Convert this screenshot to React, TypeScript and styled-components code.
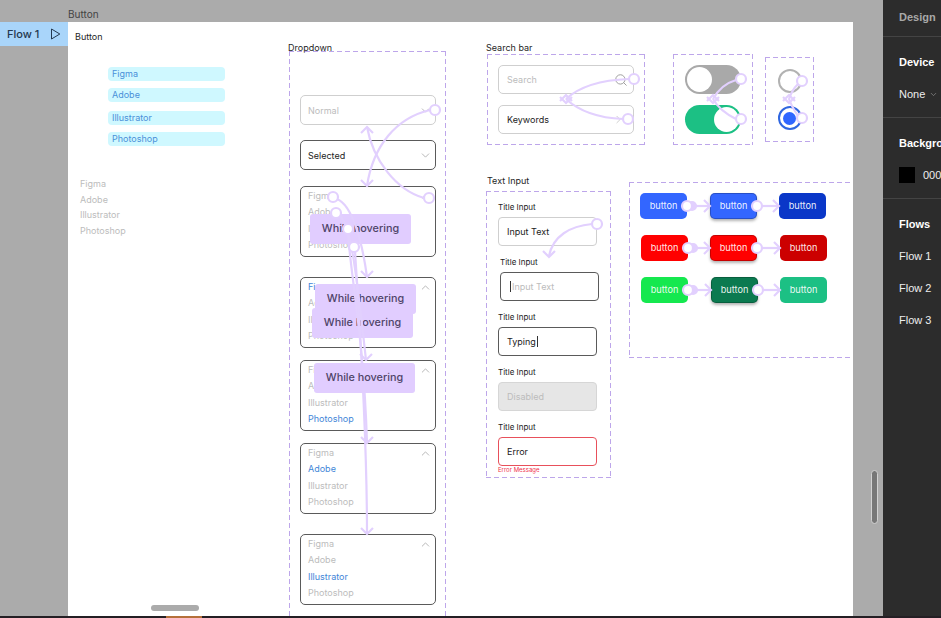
import { Fragment } from "react";
import styled, { createGlobalStyle, css } from "styled-components";
import { ChevronDown, ChevronRight, ChevronUp, Search } from "lucide-react";

const LILAC = "#e2d0fe";
const LIST = ["Figma", "Adobe", "Illustrator", "Photoshop"];

const dashed = css`
	background:
		repeating-linear-gradient(to right, #bda6ea 0 5px, transparent 5px 8px) top / 100% 1px no-repeat,
		repeating-linear-gradient(to right, #bda6ea 0 5px, transparent 5px 8px) bottom / 100% 1px no-repeat,
		repeating-linear-gradient(to bottom, #bda6ea 0 5px, transparent 5px 8px) left / 1px 100% no-repeat,
		repeating-linear-gradient(to bottom, #bda6ea 0 5px, transparent 5px 8px) right / 1px 100% no-repeat;
`;

const GlobalStyle = createGlobalStyle`
	html, body {
		margin: 0;
		padding: 0;
		background: #ababab;
		font-family: Inter, "Liberation Sans", sans-serif;
	}
`;

const Nodes: [number, number][] = [
	[435, 110], [429, 198], [333, 197], [336, 213], [348, 229], [354, 247],
	[634, 79], [628, 119], [741, 79], [741, 119], [802, 81], [802, 118], [597, 224],
	[687, 206], [757, 206], [688, 248], [757, 248], [688, 290], [758, 290],
];

const Curves = [
	"M430 110C396 118 373 146 367 186",
	"M424 198C396 190 373 160 367 127",
	"M337 199C352 205 362 240 367 277",
	"M340 216C352 225 358 290 366 360",
	"M348 233C350 270 364 340 367 443",
	"M355 251C358 300 367 420 367 534",
	"M629 79C602 80 580 86 566 99",
	"M623 119C600 118 580 112 566 99",
	"M736 80C726 83 718 90 713 99",
	"M736 119C726 114 718 108 713 99",
	"M798 84C794 88 791 93 789 99",
	"M798 116C794 110 791 105 789 99",
	"M592 224C570 226 553 236 549 256",
	"M692 206H710", "M762 206H779",
	"M693 248H710", "M762 248H780",
	"M693 290H711", "M763 290H780",
];

// x, y, direction the arrow travels
const Heads: [number, number, "up" | "down" | "right"][] = [
	[367, 186, "down"], [367, 127, "up"], [367, 277, "down"], [366, 360, "down"],
	[367, 443, "down"], [367, 534, "down"],
	[566, 103, "down"], [566, 95, "up"], [713, 103, "down"], [713, 95, "up"],
	[789, 103, "down"], [789, 95, "up"], [549, 257, "down"],
	[710, 206, "right"], [779, 206, "right"], [710, 248, "right"], [780, 248, "right"],
	[711, 290, "right"], [780, 290, "right"],
];

const headPath = (x: number, y: number, dir: string) => {
	if (dir === "down") return `M${x - 6} ${y - 6}L${x} ${y}L${x + 6} ${y - 6}`;
	if (dir === "up") return `M${x - 6} ${y + 6}L${x} ${y}L${x + 6} ${y + 6}`;
	return `M${x - 6} ${y - 6}L${x} ${y}L${x - 6} ${y + 6}`;
};

const Connections = () => (
	<Overlay viewBox="0 0 941 618" width="941" height="618">
		<g fill="none" stroke={LILAC} strokeWidth="2.2">
			{Curves.map((d) => (
				<path key={d} d={d} />
			))}
			{Heads.map(([x, y, dir]) => (
				<path key={`${x}-${y}-${dir}`} d={headPath(x, y, dir)} />
			))}
			<circle cx="692" cy="206" r="4" fill={LILAC} />
			<circle cx="693" cy="248" r="4" fill={LILAC} />
			<circle cx="693" cy="290" r="4" fill={LILAC} />
			{Nodes.map(([x, y]) => (
				<circle key={`${x}-${y}`} cx={x} cy={y} r="5" fill="#fff" />
			))}
		</g>
	</Overlay>
);

const OpenList = ({ active, gap }: { active?: string; gap: number }) => (
	<Select $open $mt={gap}>
		<ListCol>
			{LIST.map((name) => (
				<ListItem key={name} $active={name === active}>
					{name}
				</ListItem>
			))}
		</ListCol>
		<Chevron $open>
			<ChevronUp size={13} strokeWidth={1.5} />
		</Chevron>
	</Select>
);

const App = () => {
	return (
		<Fragment>
			<GlobalStyle />
			<Page>
				<Workspace>
					<Viewport>
						<FrameLabel>Button</FrameLabel>
						<FlowTag>
							Flow 1
							<svg width="11" height="12" viewBox="0 0 11 12" fill="none" stroke="#24384f" strokeWidth="1">
								<path d="M1.5 1L9.8 6L1.5 11Z" />
							</svg>
						</FlowTag>
						<Frame>
							<Block $x={7} $y={9}>
								<Caption>Button</Caption>
							</Block>

							<Block $x={40} $y={45}>
								<ChipStack>
									<Chip>Figma</Chip>
									<Chip $mt={7}>Adobe</Chip>
									<Chip $mt={9}>Illustrator</Chip>
									<Chip $mt={7}>Photoshop</Chip>
								</ChipStack>
							</Block>

							<Block $x={12} $y={156}>
								<PlainList>
									{LIST.map((name) => (
										<PlainItem key={name}>{name}</PlainItem>
									))}
								</PlainList>
							</Block>

							<Block $x={220} $y={20}>
								<Caption>Dropdown</Caption>
							</Block>
							<DropdownBox>
								<Select $muted>
									<span>Normal</span>
									<Chevron>
										<ChevronDown size={13} strokeWidth={1.5} />
									</Chevron>
								</Select>
								<Select $mt={15}>
									<Value>Selected</Value>
									<Chevron>
										<ChevronDown size={13} strokeWidth={1.5} />
									</Chevron>
								</Select>
								<OpenList gap={16} />
								<OpenList active="Figma" gap={20} />
								<OpenList active="Photoshop" gap={12} />
								<OpenList active="Adobe" gap={12} />
								<OpenList active="Illustrator" gap={20} />
							</DropdownBox>

							<Hover $x={242} $y={192}>While hovering</Hover>
							<Hover $x={247} $y={262}>While hovering</Hover>
							<Hover $x={244} $y={286}>While hovering</Hover>
							<Hover $x={246} $y={341} $above>While hovering</Hover>

							<Block $x={418} $y={20}>
								<Caption>Search bar</Caption>
							</Block>
							<SearchBox>
								<Field>
									<Placeholder>Search</Placeholder>
									<FieldIcon>
										<Search size={14} strokeWidth={1.6} color="#9a9a9a" />
									</FieldIcon>
								</Field>
								<Field>
									<Value>Keywords</Value>
									<ChevronRight size={13} strokeWidth={1.3} color="#bbb" />
								</Field>
							</SearchBox>

							<ToggleBox>
								<Toggle />
								<Toggle $on />
							</ToggleBox>

							<RadioBox>
								<Radio />
								<Radio $on />
							</RadioBox>

							<Block $x={419} $y={153}>
								<Caption>Text Input</Caption>
							</Block>
							<InputBox>
								<InputGroup>
									<InputTitle>Title Input</InputTitle>
									<TextBox>
										<Value>Input Text</Value>
									</TextBox>
								</InputGroup>
								<InputGroup $shift={2}>
									<InputTitle>Title Input</InputTitle>
									<TextBox $state="focus">
										<Caret />
										<Placeholder>Input Text</Placeholder>
									</TextBox>
								</InputGroup>
								<InputGroup>
									<InputTitle>Title Input</InputTitle>
									<TextBox $state="focus">
										<Value>Typing</Value>
										<Caret />
									</TextBox>
								</InputGroup>
								<InputGroup>
									<InputTitle>Title Input</InputTitle>
									<TextBox $state="disabled">
										<Placeholder>Disabled</Placeholder>
									</TextBox>
								</InputGroup>
								<InputGroup>
									<InputTitle>Title Input</InputTitle>
									<TextBox $state="error">
										<Value>Error</Value>
									</TextBox>
									<ErrorText>Error Message</ErrorText>
								</InputGroup>
							</InputBox>

							<ButtonBox>
								<ButtonRow>
									<Btn $bg="#3366ff">button</Btn>
									<Btn $bg="#3366ff" $pressed $ml={23}>button</Btn>
									<Btn $bg="#0a37c8" $ml={22}>button</Btn>
								</ButtonRow>
								<ButtonRow $shift={1}>
									<Btn $bg="#ff0000">button</Btn>
									<Btn $bg="#ff0000" $pressed $ml={22}>button</Btn>
									<Btn $bg="#cc0000" $ml={23}>button</Btn>
								</ButtonRow>
								<ButtonRow $shift={1}>
									<Btn $bg="#15e84f">button</Btn>
									<Btn $bg="#0b7a50" $pressed $ml={23}>button</Btn>
									<Btn $bg="#1cc084" $ml={22}>button</Btn>
								</ButtonRow>
							</ButtonBox>
						</Frame>
						<ScrollThumbY />
						<ScrollThumbX />
						<Connections />
					</Viewport>

					<Panel>
						<PanelSection $h={37}>
							<PanelTab>Design</PanelTab>
						</PanelSection>
						<PanelSection $h={81} $gap={20} $pt={19}>
							<PanelTitle>Device</PanelTitle>
							<PanelRow>
								None
								<ChevronDown size={9} color="#888" />
							</PanelRow>
						</PanelSection>
						<PanelSection $h={81} $gap={17} $pt={19}>
							<PanelTitle>Background</PanelTitle>
							<PanelRow>
								<Swatch />
								000000
							</PanelRow>
						</PanelSection>
						<FlowList>
							<FlowsTitle>Flows</FlowsTitle>
							<PanelRow>Flow 1</PanelRow>
							<PanelRow>Flow 2</PanelRow>
							<PanelRow>Flow 3</PanelRow>
						</FlowList>
					</Panel>
				</Workspace>
				<BottomStrip>
					<BottomAccent />
				</BottomStrip>
			</Page>
		</Fragment>
	);
};

export default App;

const Page = styled.div`
	width: 941px;
	height: 618px;
	overflow: hidden;
	display: flex;
	flex-direction: column;
`;

const Workspace = styled.div`
	flex: 1;
	min-height: 0;
	display: flex;
`;

const Viewport = styled.div`
	flex: 1;
	position: relative;
	padding: 22px 30px 0 68px;
	background: #ababab;
`;

const Overlay = styled.svg`
	position: absolute;
	left: 0;
	top: 0;
	z-index: 1;
	pointer-events: none;
`;

const FrameLabel = styled.div`
	position: absolute;
	left: 68px;
	top: 8px;
	font-size: 10px;
	line-height: 12px;
	color: #444;
`;

const FlowTag = styled.div`
	position: absolute;
	left: 0;
	top: 22px;
	width: 68px;
	height: 24px;
	box-sizing: border-box;
	padding: 0 7px;
	display: flex;
	align-items: center;
	justify-content: space-between;
	background: #a9d5fa;
	color: #24384f;
	font-size: 11px;
	font-weight: 500;
`;

const Frame = styled.div`
	position: relative;
	height: 100%;
	background: #fff;
	overflow: hidden;
`;

const Block = styled.div<{ $x: number; $y: number }>`
	position: absolute;
	left: ${({ $x }) => $x}px;
	top: ${({ $y }) => $y}px;
`;

const Caption = styled.div`
	font-size: 9px;
	line-height: 12px;
	color: #1f1f1f;
	white-space: nowrap;
`;

const ChipStack = styled.div`
	display: flex;
	flex-direction: column;
`;

const Chip = styled.div<{ $mt?: number }>`
	width: 117px;
	height: 14px;
	margin-top: ${({ $mt }) => $mt ?? 0}px;
	padding-left: 4px;
	box-sizing: border-box;
	border-radius: 4px;
	background: #cff8ff;
	color: #4a90d9;
	font-size: 9px;
	line-height: 14px;
`;

const PlainList = styled.div`
	display: flex;
	flex-direction: column;
	gap: 3.6px;
`;

const PlainItem = styled.div`
	font-size: 9px;
	line-height: 12px;
	color: #bcbcbc;
`;

const DropdownBox = styled.div`
	position: absolute;
	left: 221px;
	top: 29px;
	width: 157px;
	height: 600px;
	padding: 44px 0 0 11px;
	box-sizing: border-box;
	display: flex;
	flex-direction: column;
	${dashed}
`;

const Select = styled.div<{ $muted?: boolean; $open?: boolean; $mt?: number }>`
	position: relative;
	flex: none;
	width: 136px;
	height: ${({ $open }) => ($open ? 71 : 30)}px;
	margin-top: ${({ $mt }) => $mt ?? 0}px;
	box-sizing: border-box;
	padding: ${({ $open }) => ($open ? "1px 7px" : "0 7px")};
	display: flex;
	align-items: ${({ $open }) => ($open ? "flex-start" : "center")};
	justify-content: space-between;
	border: 1px solid ${({ $muted }) => ($muted ? "#cfcfcf" : "#5a5a5a")};
	border-radius: 5px;
	background: #fff;
	color: #bcbcbc;
	font-size: 9px;
`;

const Chevron = styled.span<{ $open?: boolean }>`
	display: flex;
	margin-right: -4px;
	margin-top: ${({ $open }) => ($open ? 2 : 1)}px;
	color: #a8a8a8;
`;

const ListCol = styled.div`
	display: flex;
	flex-direction: column;
`;

const ListItem = styled.div<{ $active?: boolean }>`
	font-size: 9px;
	line-height: 16.3px;
	color: ${({ $active }) => ($active ? "#3f86d8" : "#bcbcbc")};
`;

const Hover = styled.div<{ $x: number; $y: number; $above?: boolean }>`
	position: absolute;
	left: ${({ $x }) => $x}px;
	top: ${({ $y }) => $y}px;
	z-index: ${({ $above }) => ($above ? 2 : "auto")};
	width: 101px;
	height: 30px;
	border-radius: 3px;
	background: #e1cdff;
	color: #4f4468;
	font-size: 10.8px;
	font-weight: 500;
	line-height: 30px;
	text-align: center;
`;

const SearchBox = styled.div`
	position: absolute;
	left: 419px;
	top: 32px;
	width: 158px;
	height: 91px;
	padding: 11px 11px 0 11px;
	box-sizing: border-box;
	display: flex;
	flex-direction: column;
	gap: 11px;
	${dashed}
`;

const Field = styled.div`
	height: 29px;
	padding: 0 8px;
	box-sizing: border-box;
	display: flex;
	align-items: center;
	justify-content: space-between;
	border: 1px solid #cfcfcf;
	border-radius: 5px;
	font-size: 9px;
`;

const FieldIcon = styled.span`
	display: flex;
	margin-right: -3px;
`;

const Placeholder = styled.span`
	color: #bcbcbc;
	font-size: 9px;
`;

const Value = styled.span`
	color: #222;
	font-size: 9px;
`;

const ToggleBox = styled.div`
	position: absolute;
	left: 605px;
	top: 32px;
	width: 80px;
	height: 91px;
	padding-top: 11px;
	box-sizing: border-box;
	display: flex;
	flex-direction: column;
	align-items: center;
	gap: 11px;
	${dashed}
`;

const Toggle = styled.div<{ $on?: boolean }>`
	width: 56px;
	height: 29px;
	padding: 2px;
	box-sizing: border-box;
	display: flex;
	justify-content: ${({ $on }) => ($on ? "flex-end" : "flex-start")};
	border-radius: 15px;
	background: ${({ $on }) => ($on ? "#1cc084" : "#a9a9a9")};

	&::after {
		content: "";
		width: 25px;
		height: 25px;
		border-radius: 50%;
		background: #fff;
	}
`;

const RadioBox = styled.div`
	position: absolute;
	left: 697px;
	top: 35px;
	width: 49px;
	height: 85px;
	padding-top: 12px;
	box-sizing: border-box;
	display: flex;
	flex-direction: column;
	align-items: center;
	gap: 13px;
	${dashed}
`;

const Radio = styled.div<{ $on?: boolean }>`
	width: 24px;
	height: 24px;
	box-sizing: border-box;
	display: flex;
	align-items: center;
	justify-content: center;
	border: 2.5px solid ${({ $on }) => ($on ? "#2f66e0" : "#b2b2b2")};
	border-radius: 50%;

	&::after {
		content: "";
		width: 13px;
		height: 13px;
		border-radius: 50%;
		background: ${({ $on }) => ($on ? "#2f66ff" : "transparent")};
	}
`;

const InputBox = styled.div`
	position: absolute;
	left: 418px;
	top: 169px;
	width: 125px;
	height: 287px;
	padding: 11px 0 0 12px;
	box-sizing: border-box;
	display: flex;
	flex-direction: column;
	gap: 11px;
	${dashed}
`;

const InputGroup = styled.div<{ $shift?: number }>`
	position: relative;
	margin-left: ${({ $shift }) => $shift ?? 0}px;
	display: flex;
	flex-direction: column;
	gap: 4px;
`;

const InputTitle = styled.div`
	font-size: 8px;
	line-height: 11px;
	color: #222;
`;

const TextBox = styled.div<{ $state?: "focus" | "disabled" | "error" }>`
	width: 99px;
	height: 29px;
	padding: 0 8px;
	box-sizing: border-box;
	display: flex;
	align-items: center;
	border: 1px solid
		${({ $state }) =>
			$state === "focus" ? "#5a5a5a" : $state === "error" ? "#e8505b" : $state === "disabled" ? "#d6d6d6" : "#cfcfcf"};
	border-radius: 4px;
	background: ${({ $state }) => ($state === "disabled" ? "#e6e6e6" : "#fff")};
`;

const Caret = styled.span`
	width: 1px;
	height: 11px;
	margin: 0 1px;
	background: #333;
`;

const ErrorText = styled.div`
	position: absolute;
	left: 0;
	top: 44px;
	font-size: 6px;
	line-height: 8px;
	color: #f0304a;
	white-space: nowrap;
`;

const ButtonBox = styled.div`
	position: absolute;
	left: 561px;
	top: 160px;
	width: 260px;
	height: 176px;
	padding: 11px 0 0 11px;
	box-sizing: border-box;
	display: flex;
	flex-direction: column;
	gap: 16px;
	${dashed}
`;

const ButtonRow = styled.div<{ $shift?: number }>`
	display: flex;
	margin-left: ${({ $shift }) => $shift ?? 0}px;
`;

const Btn = styled.div<{ $bg: string; $pressed?: boolean; $ml?: number }>`
	width: 47px;
	height: 26px;
	margin-left: ${({ $ml }) => $ml ?? 0}px;
	border-radius: 5px;
	background: ${({ $bg }) => $bg};
	color: rgba(255, 255, 255, 0.92);
	font-size: 9.2px;
	line-height: 26px;
	text-align: center;
	${({ $pressed }) =>
		$pressed &&
		css`
			box-shadow: inset 0 0 0 1px rgba(0, 0, 0, 0.22), 0 2px 3px rgba(0, 0, 0, 0.3);
		`}
`;

const ScrollThumbY = styled.div`
	position: absolute;
	left: 871px;
	top: 470px;
	width: 7px;
	height: 54px;
	box-sizing: border-box;
	border: 1px solid #d2d2d2;
	border-radius: 4px;
	background: #777;
`;

const ScrollThumbX = styled.div`
	position: absolute;
	left: 151px;
	top: 605px;
	width: 48px;
	height: 6px;
	border-radius: 3px;
	background: #ababab;
`;

const Panel = styled.aside`
	width: 58px;
	flex: none;
	overflow: hidden;
	background: #2c2c2c;
	color: #fff;
	font-family: "Liberation Sans", Arial, sans-serif;
	font-size: 11px;
`;

const PanelSection = styled.section<{ $h: number; $gap?: number; $pt?: number }>`
	height: ${({ $h }) => $h}px;
	box-sizing: border-box;
	padding: ${({ $pt }) => $pt ?? 11}px 0 0 16px;
	display: flex;
	flex-direction: column;
	gap: ${({ $gap }) => $gap ?? 0}px;
	border-bottom: 1px solid #444;
	white-space: nowrap;
`;

const PanelTab = styled.div`
	color: #a8a8a8;
	font-weight: 700;
	line-height: 13px;
`;

const PanelTitle = styled.div`
	font-weight: 700;
	line-height: 13px;
	white-space: nowrap;
`;

const FlowsTitle = styled(PanelTitle)`
	margin-bottom: 1px;
`;

const PanelRow = styled.div`
	display: flex;
	align-items: center;
	gap: 4px;
	min-height: 11px;
	padding-bottom: 2px;
	line-height: 11px;
	color: #eee;
	white-space: nowrap;
`;

const Swatch = styled.span`
	width: 16px;
	height: 16px;
	margin-right: 4px;
	flex: none;
	background: #000;
`;

const FlowList = styled.section`
	padding: 19px 0 0 16px;
	display: flex;
	flex-direction: column;
	gap: 19px;
`;

const BottomStrip = styled.div`
	height: 2px;
	flex: none;
	padding-left: 166px;
	background: #241f24;
`;

const BottomAccent = styled.div`
	width: 36px;
	height: 2px;
	background: #b5703a;
`;
